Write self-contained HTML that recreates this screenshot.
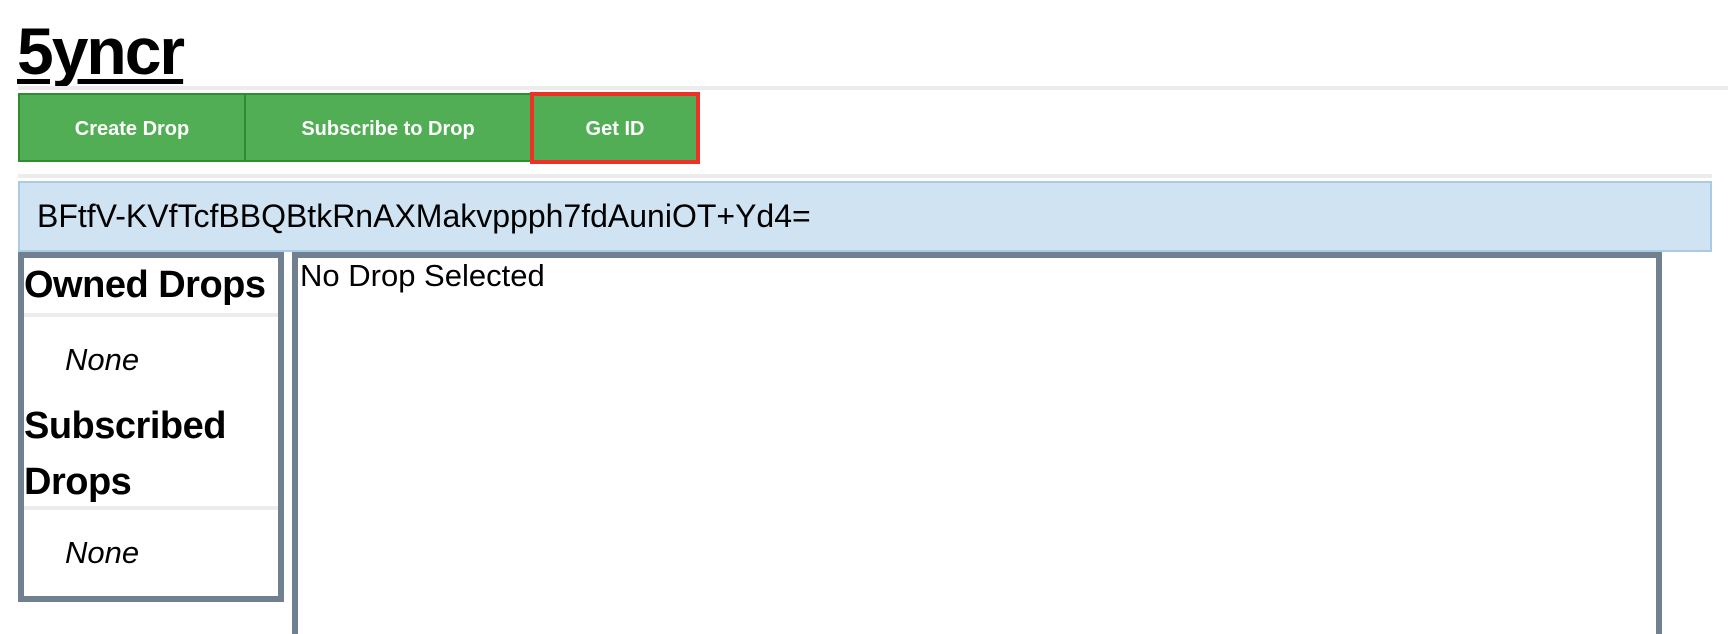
<!DOCTYPE html>
<html style="overflow:hidden;height:634px"><head><meta charset="utf-8"><style>
*{margin:0;padding:0;box-sizing:border-box}
body{width:1728px;height:634px;overflow:hidden;background:#fff;font-family:"Liberation Sans",sans-serif;position:relative}
.a{position:absolute}
h1{position:absolute;left:17px;top:14px;font-size:66px;font-weight:bold;letter-spacing:-2px;text-decoration:underline;text-decoration-thickness:5px;text-underline-offset:5px;line-height:74px}
.hr{position:absolute;left:18px;right:0;height:4px;background:#ececec}
.btn{position:absolute;top:93px;height:69px;background:#52ae54;border:2px solid #2f8c31;color:#fff;font-size:20px;font-weight:bold;display:flex;align-items:center;justify-content:center;padding-top:3px}
.h{font-weight:bold;font-size:38px;letter-spacing:-0.5px;line-height:56px;white-space:nowrap}
.none{font-style:italic;font-size:31px}
</style></head><body>
<h1>5yncr</h1>
<div class="hr" style="top:86px"></div>
<div class="btn" style="left:18px;width:228px">Create Drop</div>
<div class="btn" style="left:244px;width:288px">Subscribe to Drop</div>
<div class="btn" style="left:530px;width:170px;top:92px;height:72px;border:4px solid #ee3124">Get ID</div>
<div class="hr" style="top:174px;right:16px"></div>
<div class="a" style="left:18px;top:181px;width:1694px;height:71px;background:#cfe3f2;border:2px solid #a9cbe3;font-size:32px;line-height:67px;padding-left:17px">BFtfV-KVfTcfBBQBtkRnAXMakvppph7fdAuniOT+Yd4=</div>
<div class="a" style="left:18px;top:252px;width:266px;height:350px;border:6px solid #708090">
<div class="a h" style="left:0;top:-1px">Owned Drops</div>
<div class="a" style="left:0;right:0;top:55px;height:4px;background:#ececec"></div>
<div class="a none" style="left:41px;top:84px">None</div>
<div class="a h" style="left:0;top:140px">Subscribed<br>Drops</div>
<div class="a" style="left:0;right:0;top:248px;height:4px;background:#ececec"></div>
<div class="a none" style="left:41px;top:277px">None</div>
</div>
<div class="a" style="left:292px;top:252px;width:1370px;height:382px;border:6px solid #708090;border-bottom:none;font-size:31px;padding-left:2px;line-height:36px">No Drop Selected</div>
</body></html>
